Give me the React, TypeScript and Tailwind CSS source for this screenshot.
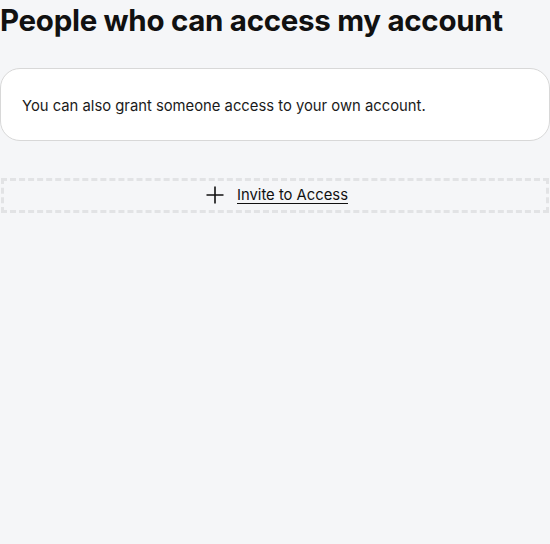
export default function App() {
  return (
    <div className="min-h-[544px] w-[550px] bg-[#f5f6f8] overflow-hidden" style={{ fontFamily: 'Inter, "Noto Sans", sans-serif' }}>
      <h1 className="text-[29.5px] font-bold leading-[41px] text-[#111111] tracking-[-0.3px]">
        People who can access my account
      </h1>
      <div className="mt-[27px] bg-white border border-[#d8d8d8] rounded-[20px] h-[73px] flex items-center pl-[21px]">
        <p className="mt-[3px] text-[14.8px] text-[#1a1a1a]">You can also grant someone access to your own account.</p>
      </div>
      <div className="mt-[37px] mx-[1px] h-[35px] border-[3px] border-dashed border-[#e2e3e5] flex items-center justify-center gap-[13px] pl-[4px]">
        <svg width="18" height="18" viewBox="0 0 18 18" className="text-[#111111] -mt-[2px]">
          <path d="M9 0.5V17.5M0.5 9H17.5" stroke="currentColor" strokeWidth="1.6" fill="none" />
        </svg>
        <span className="text-[14.8px] text-[#111111] underline underline-offset-[3px]">Invite to Access</span>
      </div>
    </div>
  );
}
